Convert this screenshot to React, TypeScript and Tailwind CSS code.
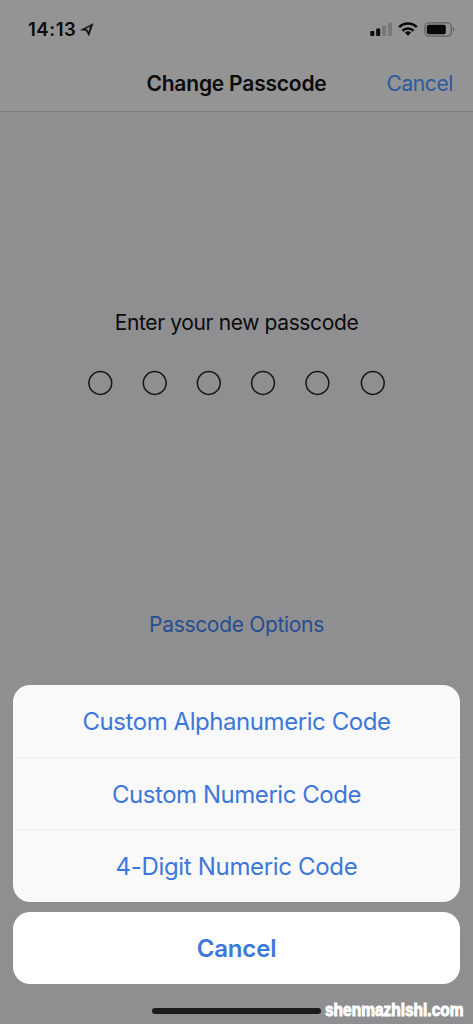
const passcodeSlots = [100.3, 154.7, 208.8, 263, 317.4, 372.8];

const options = [
  { label: 'Custom Alphanumeric Code', tracking: 'tracking-[-0.44px]' },
  { label: 'Custom Numeric Code', tracking: 'tracking-[-0.46px]' },
  { label: '4-Digit Numeric Code', tracking: 'tracking-[-0.33px]' },
];

function StatusBar() {
  return (
    <div className="flex h-[56px] items-start justify-between pl-[28px] pr-[18px] pt-[17px]">
      <div className="flex h-6 items-center">
        <span className="text-[18.5px] font-semibold leading-6 tracking-[0.55px]">14:13</span>
        {/* Location arrow */}
        <svg className="ml-[4px] mt-px h-[14px] w-[14px]" viewBox="0 0 14 14">
          <path
            d="M13.2.4 8.9 12.9 6.2 7.8.7 6.9zM10.4 3.3 5 6.1l2.2.5 1.3 2.6z"
            fill="#111111"
            stroke="#111111"
            strokeWidth="0.35"
            strokeLinejoin="round"
            fillRule="evenodd"
          />
        </svg>
      </div>

      <div className="flex h-6 items-center">
        {/* Signal */}
        <svg className="h-[14px] w-[22px]" viewBox="0 0 22 14">
          <rect x="0.3" y="9" width="4" height="5" rx="1" fill="#080808" />
          <rect x="6.2" y="6.4" width="4" height="7.6" rx="1" fill="#080808" />
          <rect x="12.1" y="3.5" width="4" height="10.5" rx="1" fill="#787878" />
          <rect x="18" y="0.5" width="4" height="13.5" rx="1" fill="#787878" />
        </svg>
        {/* Wi-Fi */}
        <svg className="ml-[6px] h-[14px] w-[20px]" viewBox="0 0 20 14" fill="none" stroke="#080808" strokeWidth="2.6">
          <path d="M1.2 5.1a12.6 12.6 0 0 1 17.6 0" />
          <path d="M4.5 8.7a7.9 7.9 0 0 1 11 0" />
          <path d="M10 13.7 6.9 10.8a4.5 4.5 0 0 1 6.2 0z" fill="#080808" stroke="none" />
        </svg>
        {/* Battery */}
        <svg className="ml-[6px] h-[15px] w-[31px]" viewBox="0 0 31 15">
          <rect x="0.9" y="0.9" width="26.4" height="13.2" rx="3.8" fill="none" stroke="#626262" strokeWidth="1.3" />
          <rect x="2.8" y="2.8" width="19" height="9.4" rx="2" fill="#080808" />
          <path d="M29 5.1a2.8 2.8 0 0 1 0 4.8z" fill="#626262" />
        </svg>
      </div>
    </div>
  );
}

export default function App() {
  return (
    <div className="flex h-[1024px] w-[473px] flex-col overflow-hidden bg-[#8f8f92] font-['Inter','Liberation_Sans',sans-serif] text-[#0b0b0b]">
      <header className="h-[112px] shrink-0 border-b border-[#7c7c7e] bg-[#949494]">
        <StatusBar />
        <div className="grid h-[55px] grid-cols-[1fr_auto_1fr] items-center pr-[20px] pl-[20px]">
          <span />
          <h1 className="whitespace-nowrap text-[21px] font-semibold tracking-[-0.2px]">Change Passcode</h1>
          <button className="justify-self-end text-[21px] tracking-[-0.4px] text-[#2d5a9f]">Cancel</button>
        </div>
      </header>

      <main className="flex h-[573px] shrink-0 flex-col items-center pt-[195px]">
        <p className="whitespace-nowrap text-[21px] leading-8 tracking-[-0.37px]">Enter your new passcode</p>
        <svg className="mt-[31px] h-[26px] w-full" viewBox="0 0 473 26" fill="none" stroke="#161617" strokeWidth="1.5">
          {passcodeSlots.map((cx) => (
            <circle key={cx} cx={cx} cy="13" r="11.4" />
          ))}
        </svg>
        <button className="mt-[213px] whitespace-nowrap text-[21px] leading-8 tracking-[-0.32px] text-[#264d90]">
          Passcode Options
        </button>
      </main>

      <section className="mx-[13px] shrink-0">
        <div className="overflow-hidden rounded-[17px] bg-[#f9f9f9]">
          {options.map((option) => (
            <button
              key={option.label}
              className="flex h-[72px] w-full items-center justify-center whitespace-nowrap border-b border-[#ececed] pt-[2px] text-[24px] text-[#3c78da] first:h-[73px] last:border-b-0"
            >
              <span className={option.tracking}>{option.label}</span>
            </button>
          ))}
        </div>
        <button className="mt-[10px] flex h-[72px] w-full items-center justify-center rounded-[17px] bg-white pt-[2px] text-[24px] font-semibold tracking-[-0.15px] text-[#3c78da]">
          Cancel
        </button>
      </section>

      <footer className="flex h-[40px] shrink-0 items-start pl-[152px]">
        <div className="mt-[24px] h-[6px] w-[169px] shrink-0 rounded-full bg-[#1b1b1b]" />
        <span className="ml-[4px] mt-[14px] origin-left scale-x-[0.86] scale-y-[1.05] whitespace-nowrap font-['Liberation_Sans_Narrow','Liberation_Sans',sans-serif] text-[18px] font-bold leading-6 text-white [-webkit-text-stroke:1px_white]">
          shenmazhishi.com
        </span>
      </footer>
    </div>
  );
}
